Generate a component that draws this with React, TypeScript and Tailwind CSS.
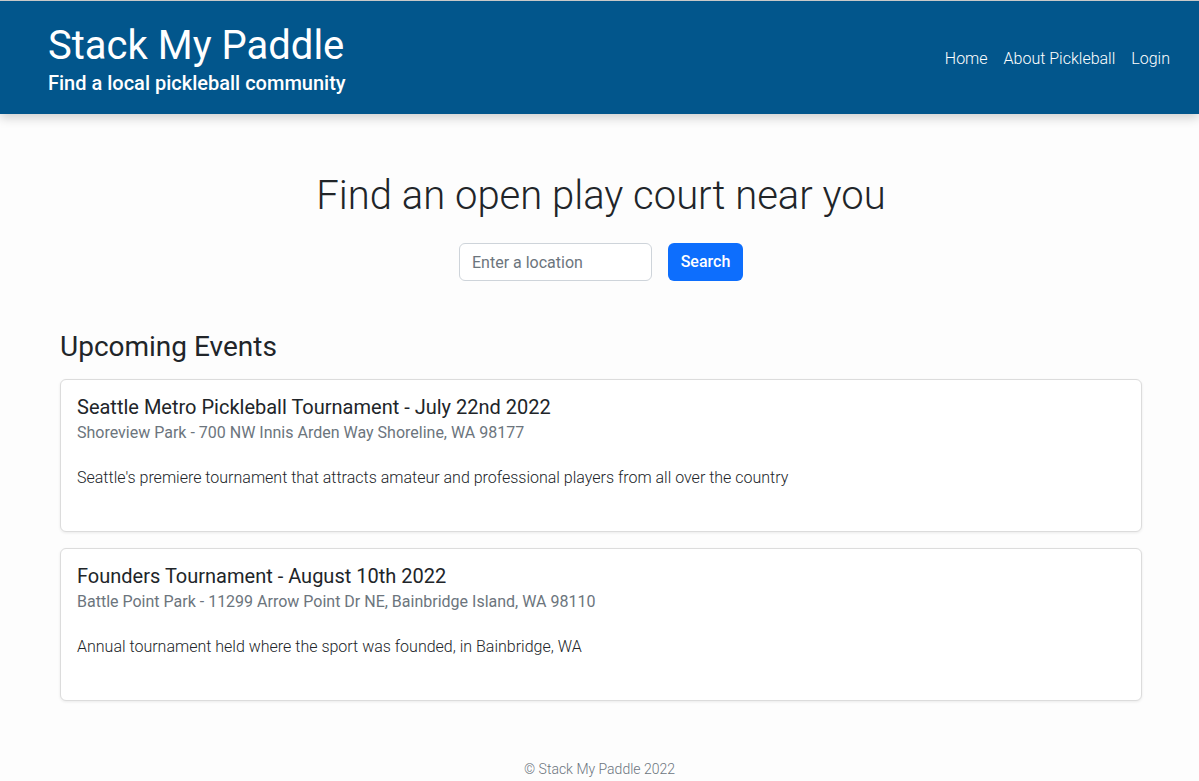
const events = [
  {
    title: 'Seattle Metro Pickleball Tournament - July 22nd 2022',
    place: 'Shoreview Park - 700 NW Innis Arden Way Shoreline, WA 98177',
    text: "Seattle's premiere tournament that attracts amateur and professional players from all over the country",
  },
  {
    title: 'Founders Tournament - August 10th 2022',
    place: 'Battle Point Park - 11299 Arrow Point Dr NE, Bainbridge Island, WA 98110',
    text: 'Annual tournament held where the sport was founded, in Bainbridge, WA',
  },
]

export default function App() {
  return (
    <div className="min-h-[781px] bg-[#fdfdfd] font-['Roboto',sans-serif] text-[#212529]">
      <header className="flex items-center justify-between border-t border-[#c8c8c8] bg-[#02568c] pb-[18px] pl-[48px] pr-[29px] pt-[21px] shadow-[0_4px_10px_rgba(0,0,0,0.18)]">
        <div className="text-white">
          <h1 className="text-[40px] leading-[48px]">Stack My Paddle</h1>
          <p className="text-[20px] font-medium leading-[26px]">Find a local pickleball community</p>
        </div>
        <nav className="flex gap-4 text-[16px] font-light text-white">
          <a>Home</a>
          <a>About Pickleball</a>
          <a>Login</a>
        </nav>
      </header>

      <main className="pl-[60px] pr-[57px] pt-[58px]">
        <h2 className="text-center text-[40px] font-light leading-[48px]">Find an open play court near you</h2>
        <div className="mt-[23px] flex justify-center gap-4">
          <input
            className="h-[38px] w-[193px] rounded-md border border-[#ced4da] bg-white px-3 text-[16px] text-[#212529] placeholder:text-[#6c757d]"
            placeholder="Enter a location"
          />
          <button className="h-[38px] w-[75px] rounded-md bg-[#0d6efd] text-[16px] font-medium text-white">Search</button>
        </div>

        <h3 className="mt-[49px] text-[28px] leading-[34px]">Upcoming Events</h3>
        <div className="mt-[15px] flex flex-col gap-4">
          {events.map((e) => (
            <div
              key={e.title}
              className="h-[153px] rounded-md border border-[#dcdcdc] bg-white px-4 pb-4 pt-[15px] shadow-[0_1px_3px_rgba(0,0,0,0.08)]"
            >
              <h5 className="text-[20px] leading-[24px]">{e.title}</h5>
              <p className="mt-[2px] text-[16px] leading-[24px] text-[#6c757d]">{e.place}</p>
              <p className="mt-[21px] text-[16px] font-light leading-[24px]">{e.text}</p>
            </div>
          ))}
        </div>
      </main>

      <footer className="pt-[58px] text-center text-[14px] font-light leading-[20px] text-[#6c757d]">
        © Stack My Paddle 2022
      </footer>
    </div>
  )
}
